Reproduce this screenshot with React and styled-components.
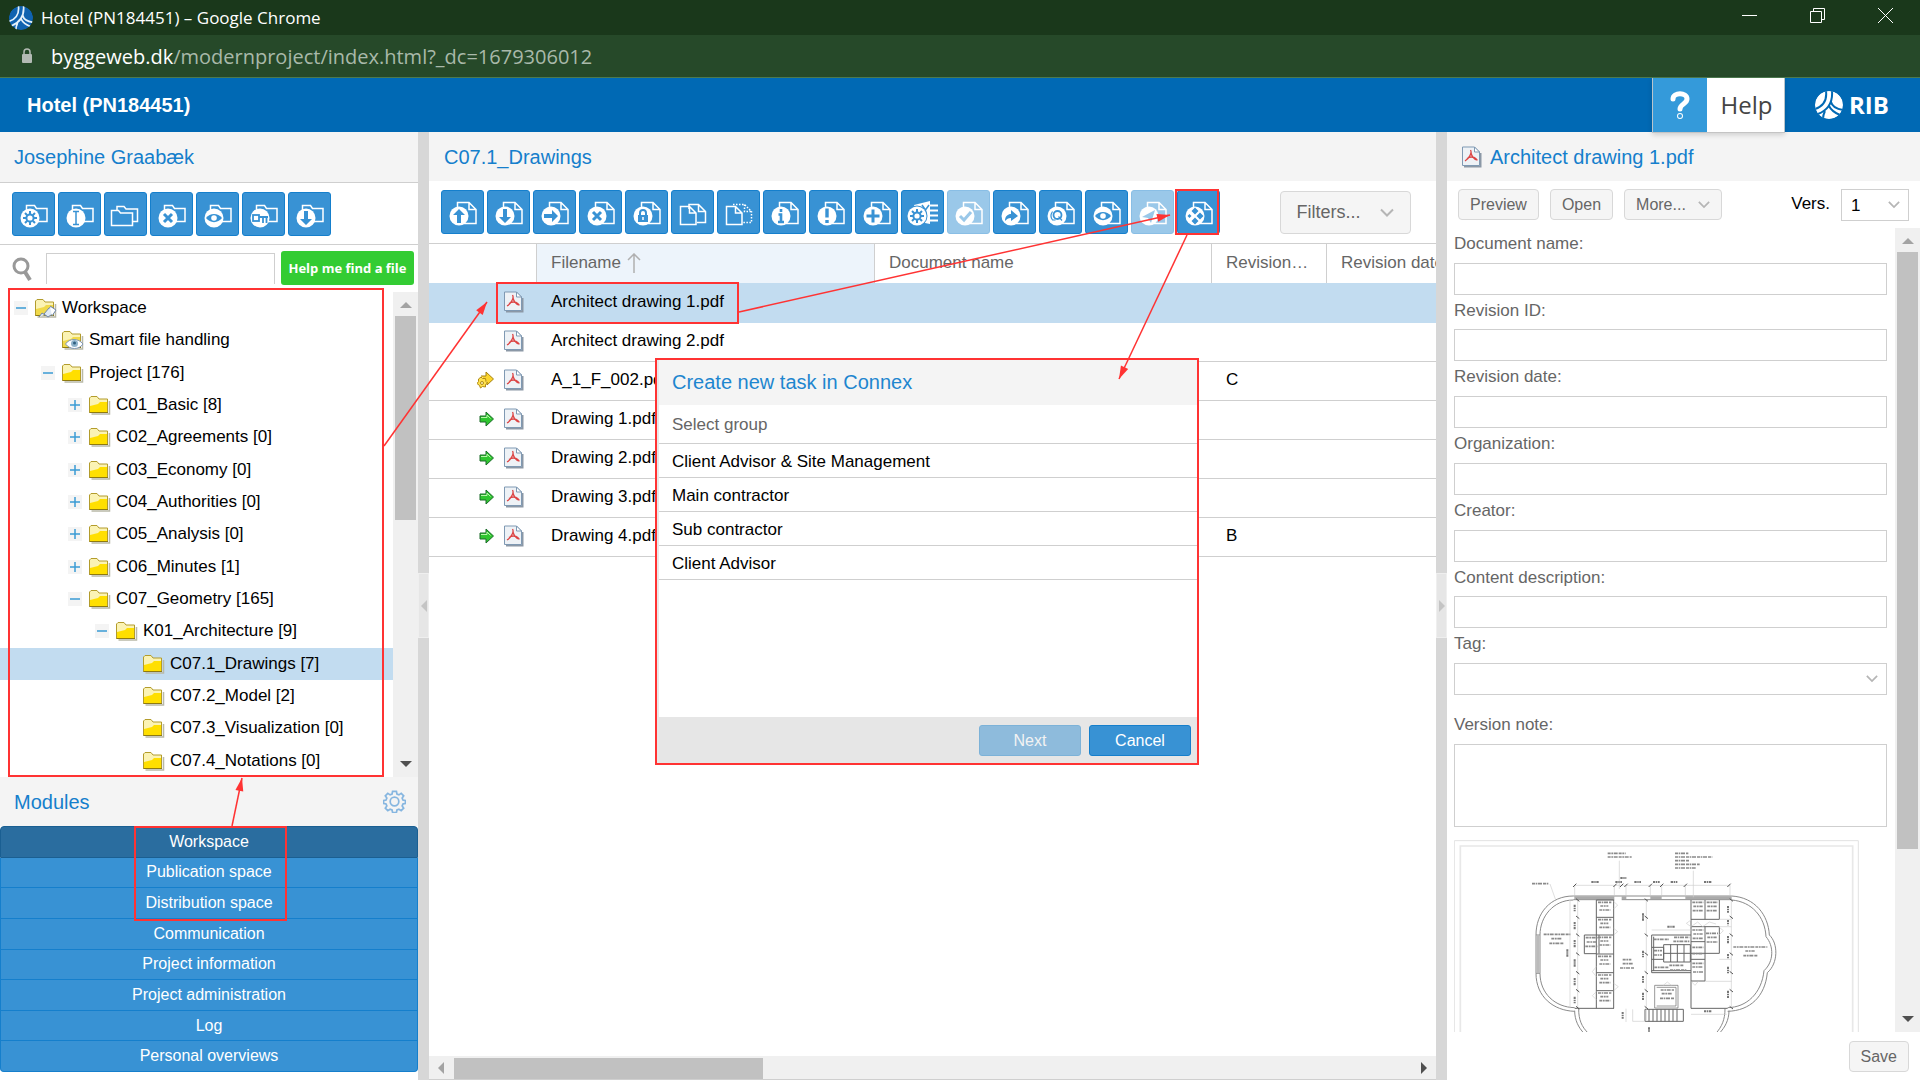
import React from "react"
import styled, { createGlobalStyle, css } from "styled-components"

const GlobalStyle = createGlobalStyle`
  * {
    box-sizing: border-box;
  }
  body {
    margin: 0;
    background: #fff;
    overflow: hidden;
  }
  body, button, input, select, textarea {
    font-family: "Liberation Sans", Arial, sans-serif;
    font-size: 17px;
  }
  svg {
    display: block;
    flex: none;
  }
`

const Page = styled.div`
  position: relative;
  display: flex;
  flex-direction: column;
  height: 100vh;
  overflow: hidden;
`

/* browser chrome */
const TitleBar = styled.div`
  display: flex;
  align-items: center;
  gap: 8px;
  height: 35px;
  padding: 0 27px 0 9px;
  background: #1a381b;
  color: #fff;
  font-family: "Open Sans", sans-serif;
  font-size: 17px;
`
const WindowTitle = styled.span`
  flex: 1;
`
const WindowControls = styled.div`
  display: flex;
  gap: 53px;
  padding-bottom: 4px;
`
const WindowButton = styled.button`
  padding: 0;
  border: 0;
  background: none;
  color: #fff;
`
const UrlBar = styled.div`
  display: flex;
  align-items: center;
  gap: 18px;
  height: 43px;
  padding-left: 21px;
  background: #264929;
  border-bottom: 1px solid #4c7a4f;
  color: #a9b9aa;
  font-family: "Open Sans", sans-serif;
  font-size: 20px;
  b {
    color: #fff;
    font-weight: 400;
  }
`

/* application header */
const AppHeader = styled.header`
  display: flex;
  align-items: center;
  height: 54px;
  padding-left: 27px;
  background: #0069b4;
  color: #fff;
`
const ProjectTitle = styled.h1`
  flex: 1;
  margin: 0;
  font-size: 20px;
`
const HelpLink = styled.a`
  display: flex;
  align-self: stretch;
  z-index: 1;
  margin-bottom: -1px;
  border-left: 1px solid #b8c4cc;
  border-right: 1px solid #b8c4cc;
  border-bottom: 1px solid #c4c4c4;
  box-shadow: 0 2px 5px rgba(0, 0, 0, 0.15);
  background: #fff;
  color: #444;
  font-family: "Open Sans", sans-serif;
  font-size: 24px;
  font-weight: 500;
  line-height: 54px;
  text-decoration: none;
`
const HelpMark = styled.span`
  width: 54px;
  background: #349ada;
  display: flex;
  align-items: center;
  justify-content: center;
`
const HelpText = styled.span`
  width: 77px;
  padding-left: 2px;
  text-align: center;
`
const Brand = styled.div`
  display: flex;
  align-items: center;
  gap: 6px;
  width: 135px;
  padding-left: 30px;
  font-family: "Open Sans", sans-serif;
  font-size: 24px;
  font-weight: 700;
  line-height: 24px;
`

/* panels */
const Main = styled.main`
  flex: 1;
  min-height: 0;
  display: grid;
  grid-template-columns: 418px 11px minmax(0, 1fr) 11px 473px;
`
const Panel = styled.section`
  display: flex;
  flex-direction: column;
  min-width: 0;
  min-height: 0;
`
const Splitter = styled.div`
  display: flex;
  flex-direction: column;
  justify-content: center;
  background: #d7d7d7;
  padding-bottom: 1px;
`
const Collapser = styled.button`
  height: 65px;
  padding: 0 0 0 2px;
  border: 1px solid #efefef;
  background: #e6e6e6;
`
const PanelHeader = styled.h2`
  display: flex;
  align-items: center;
  gap: 8px;
  flex: none;
  height: ${p => p.$height || 49}px;
  margin: 0;
  padding: 0 12px 0 ${p => p.$left || 14}px;
  background: #f4f4f4;
  border-bottom: ${p => (p.$line ? "1px solid #cfcfcf" : "0")};
  color: #157fcc;
  font-size: 20px;
  font-weight: 400;
  line-height: 22px;
  span {
    flex: 1;
  }
`
const Toolbar = styled.div`
  display: flex;
  align-items: flex-start;
  gap: 3px;
  flex: none;
  height: ${p => p.$height || 62}px;
  padding: 9px 12px 0;
  border-bottom: 1px solid #cfcfcf;
`
const blueButton = css`
  background: #3892d4;
  border: 1px solid #157fcc;
  border-radius: 3px;
  color: #fff;
`
const ToolButton = styled.button`
  ${blueButton}
  flex: none;
  width: 43px;
  height: 44px;
  padding: 0;
  opacity: ${p => (p.disabled ? 0.5 : 1)};
`
const GreyButton = styled.button`
  display: flex;
  align-items: center;
  justify-content: center;
  gap: 12px;
  height: ${p => p.$height || 31}px;
  padding: 0 11px;
  background: #f5f5f5;
  border: 1px solid #d8d8d8;
  border-radius: 4px;
  color: #666;
  font-size: ${p => p.$size || 16}px;
`
const FilterButton = styled(GreyButton)`
  width: 131px;
  gap: 18px;
  margin: 1px 0 0 57px;
`

/* search */
const SearchRow = styled.div`
  display: flex;
  align-items: flex-start;
  gap: 6px;
  height: 47px;
  padding: 6px 4px 0 11px;
`
const SearchInput = styled.input`
  flex: 1;
  min-width: 0;
  height: 31px;
  margin: 2px 0 0 7px;
  padding: 0 8px;
  border: 1px solid #cfcfcf;
  border-bottom: 0;
`
const FindButton = styled.button`
  width: 133px;
  height: 34px;
  padding: 0;
  border: 0;
  border-radius: 3px;
  background: #33cc33;
  color: #fff;
  font-family: "Open Sans", sans-serif;
  font-size: 13px;
  font-weight: 700;
`

/* scrollbars */
const ScrollArea = styled.div`
  flex: 1;
  display: flex;
  min-height: 0;
`
const Track = styled.div`
  display: flex;
  flex: none;
  align-items: center;
  background: #f0f0f0;
  ${p =>
    p.$horizontal
      ? "height: 24px; padding: 0 9px; border-bottom: 1px solid #cfcfcf;"
      : "width: 25px; flex-direction: column; padding: 10px 0;"}
`
const Thumb = styled.div`
  background: #c1c1c1;
  ${p =>
    p.$horizontal
      ? "width: 309px; height: 21px; margin: 2px auto 0 10px;"
      : "width: 21px; margin: 8px 0 auto; flex: 0 0 " + p.$size + ";"}
`

/* tree */
const Tree = styled.ul`
  flex: 1;
  display: flex;
  flex-direction: column;
  margin: 0;
  padding: 0;
  list-style: none;
`
const TreeRow = styled.li`
  flex: 1;
  display: flex;
  align-items: center;
  padding-left: ${p => 14 + 27 * p.$level}px;
  background: ${p => (p.$selected ? "#c2dcf0" : "none")};
  line-height: 20px;
  white-space: nowrap;
`
const Expander = styled.span`
  width: 14px;
  height: 14px;
  margin-right: 7px;
  background: ${p => (p.$visible ? "#f4f4f4" : "none")};
`
const TreeLabel = styled.span`
  margin-left: 5px;
`

/* modules */
const ModuleList = styled.nav`
  display: flex;
  flex-direction: column;
  flex: none;
  height: 246px;
  margin-bottom: 8px;
`
const ModuleButton = styled.button`
  flex: 1;
  padding: 0;
  background: ${p => (p.$active ? "#2a6d9f" : "#3892d4")};
  border: 1px solid ${p => (p.$active ? "#1a5f92" : "#157fcc")};
  border-top-width: ${p => (p.$active ? 1 : 0)}px;
  color: #fff;
  font-size: 16px;
  &:first-child {
    border-radius: 4px 4px 0 0;
  }
  &:last-child {
    border-radius: 0 0 4px 4px;
  }
`

/* file grid */
const GridArea = styled.div`
  flex: 1;
  min-height: 0;
  overflow: hidden;
`
const FileTable = styled.table`
  width: calc(100% + 60px);
  table-layout: fixed;
  border-collapse: separate;
  border-spacing: 0;
  th, td {
    padding: 0 14px;
    text-align: left;
    font-weight: 400;
    white-space: nowrap;
  }
  th {
    height: 39px;
    padding-bottom: 1px;
    border-left: 1px solid #cfcfcf;
    color: #666;
  }
  th:first-child {
    border-left: 0;
  }
  td {
    height: 39px;
    padding: 0 15px 2px;
    border-bottom: 1px solid #cfcfcf;
  }
  tbody tr:first-child td {
    height: 40px;
    border-bottom-color: #c2dcf0;
  }
`
const SortedHeader = styled.th`
  background: #edf4fb;
  svg {
    display: inline-block;
    margin-left: 6px;
    vertical-align: -5px;
  }
`
const FileRow = styled.tr`
  background: ${p => (p.$selected ? "#c2dcf0" : "none")};
`
const RowIcons = styled.div`
  display: flex;
  align-items: center;
  justify-content: flex-end;
  gap: 9px;
  margin-right: -3px;
`

/* detail panel */
const DetailBar = styled.div`
  display: flex;
  align-items: flex-start;
  gap: 11px;
  height: 47px;
  padding: 8px 11px 0;
`
const VersionLabel = styled.label`
  margin-left: auto;
  line-height: 30px;
`
const SelectBox = styled.span`
  display: block;
  position: relative;
  width: ${p => p.$width};
  svg {
    position: absolute;
    right: 9px;
    top: 11px;
    pointer-events: none;
  }
`
const fieldBox = css`
  display: block;
  width: 100%;
  height: 32px;
  margin: 0;
  padding: 0 9px;
  border: 1px solid #cfcfcf;
  border-radius: 0;
  background: #fff;
`
const Select = styled.select`
  ${fieldBox}
  appearance: none;
`
const TextInput = styled.input`
  ${fieldBox}
`
const NoteArea = styled.textarea`
  ${fieldBox}
  height: 83px;
  resize: none;
`
const Form = styled.form`
  flex: 1;
  min-width: 0;
  padding: 0 8px 0 7px;
  overflow: hidden;
`
const Fields = styled.div`
  display: grid;
  grid-template-rows: repeat(7, 1fr);
  height: 467px;
`
const Field = styled.div`
  display: flex;
  flex-direction: column;
  justify-content: space-between;
`
const FieldLabel = styled.label`
  color: #666;
  line-height: 32px;
`
const NoteField = styled(Field)`
  margin: 14px 0 13px;
  gap: 3px;
`
const Footer = styled.div`
  display: flex;
  justify-content: flex-end;
  height: 48px;
  padding: 9px 11px 0;
`

/* dialog */
const Dialog = styled.div`
  position: absolute;
  left: 657px;
  top: 360px;
  width: 540px;
  height: 403px;
  display: flex;
  flex-direction: column;
  background: #fff;
  border-left: 2px solid #e8e8e8;
`
const DialogTitle = styled.h2`
  height: 45px;
  margin: 0;
  padding-left: 13px;
  background: #f4f4f4;
  color: #1e86cf;
  font-size: 20px;
  font-weight: 400;
  line-height: 44px;
`
const DialogHint = styled.div`
  height: 39px;
  padding-left: 13px;
  color: #666;
  line-height: 40px;
  border-bottom: 1px solid #cfcfcf;
`
const GroupList = styled.ul`
  flex: 1;
  margin: 0;
  padding: 0;
  list-style: none;
`
const Group = styled.li`
  height: 34px;
  padding-left: 13px;
  border-bottom: 1px solid #cfcfcf;
  line-height: 36px;
`
const DialogFooter = styled.div`
  display: flex;
  justify-content: flex-end;
  gap: 8px;
  height: 46px;
  padding: 8px 6px 0;
  background: #e6e6e6;
`
const DialogButton = styled.button`
  ${blueButton}
  width: 102px;
  height: 31px;
  padding: 0;
  font-size: 16px;
  opacity: ${p => (p.disabled ? 0.5 : 1)};
`
const Overlay = styled.svg`
  position: absolute;
  left: 0;
  top: 0;
  pointer-events: none;
`

const BLUE = "#3892d4"

/* what is drawn on the white disc of a toolbar icon, disc centre is 17,25 */
const marks = {
  up: <path d="M17 18l6 6h-4v8h-4v-8h-4z" fill={BLUE} />,
  down: <path d="M17 32l6-6h-4v-8h-4v8h-4z" fill={BLUE} />,
  right: <path d="M24 25l-6-6v4h-8v4h8v4z" fill={BLUE} />,
  cross: <path d="M13 21l8 8M21 21l-8 8" stroke={BLUE} strokeWidth="3" />,
  lock: (
    <g>
      <rect x="12" y="24" width="10" height="7" fill={BLUE} />
      <path d="M14 24v-2a3 3 0 0 1 6 0v2" fill="none" stroke={BLUE} strokeWidth="2" />
      <path d="M17 26v3" stroke="#fff" />
    </g>
  ),
  info: <path d="M17 18v3M14.500 23.500H17V31M14 31h6" stroke={BLUE} strokeWidth="2.6" fill="none" />,
  warn: <path d="M17 17.5v9M17 29v3" stroke={BLUE} strokeWidth="3.4" />,
  plus: <path d="M17 18.5v13M10.500 25h13" stroke={BLUE} strokeWidth="3" />,
  check: <path d="M12 25l4 4 7-8" fill="none" stroke={BLUE} strokeWidth="3" />,
  share: <path d="M11 30c0-5 3-7 6-7v-4l7 6-7 5v-3c-3 0-4 1-6 3z" fill={BLUE} />,
  search: (
    <g fill="none" stroke={BLUE} strokeWidth="1.8">
      <circle cx="17.500" cy="24" r="4" />
      <path d="M18.500 25.500l3.500 4M12.500 20.500c-2 3-2 6 0 8.500h3" strokeWidth="1.200" />
    </g>
  ),
  eye: (
    <g>
      <path d="M9 25c4-5.500 12-5.500 16 0-4 5.500-12 5.500-16 0z" fill={BLUE} />
      <circle cx="17" cy="25" r="2.800" fill="#fff" />
    </g>
  ),
  send: <path d="M10 26l13-7-4 13-3-5z" fill={BLUE} />,
  connex: (
    <path
      d="M17 16.500l3.500 3.500-3.500 3.500-3.500-3.500zM22 21.500l3.500 3.500-3.500 3.500-3.500-3.500zM17 26.500l3.500 3.500-3.500 3.500-3.500-3.500zM11.500 23l2 2-2 2-2-2z"
      fill={BLUE}
    />
  ),
  gear: (
    <g stroke={BLUE} fill="none">
      <circle cx="17" cy="25" r="3.600" strokeWidth="2" />
      <path
        d="M17 18v3M17 29v3M10 25h3M21 25h3M12 20l2.200 2.200M20 28l2 2M22 20l-2.200 2.200M12 30l2.200-2.200"
        strokeWidth="2"
      />
    </g>
  ),
  text: <path d="M14 18.500h6M14 31.500h6M17 18.500v13" stroke={BLUE} strokeWidth="1.500" />,
  key: (
    <g fill="none" stroke={BLUE} strokeWidth="1.800">
      <rect x="10" y="22" width="6" height="6" />
      <path d="M16 24h9M20 24v6M23.500 24v6" />
    </g>
  )
}

const ToolIcon = ({ base, mark }) => (
  <svg width="41" height="42" viewBox="0 0 41 42" fill="none" stroke="#fff" strokeWidth="1.500">
    {base === "doc" && <path d="M15.500 20V11.500H27l7 7V32.500H16M27 11.500v7h7" />}
    {base === "folder" && <path d="M13.500 26V12.500h8l2 3h10.500v13H16" />}
    {base === "folders" && (
      <g>
        <path d="M6.500 32.500V17.500h7l2 2.500h12v12.500z" />
        <path d="M12 17V13.500h7l2 2.500h11.500v12.500h-5" />
      </g>
    )}
    {base === "docs" && (
      <g>
        <path d="M17 18v-4.500h9.500l7 7v11H25M26.500 13.500v7h7" />
        <path d="M8.500 15.500h9l6.500 6.500v11.500H8.500zM17.500 15.500V22H24" />
      </g>
    )}
    {base === "dotted" && (
      <g>
        <path d="M15 13.500h11.500l7 7v11H25M26.500 13.500v7h7" strokeDasharray="1.500 1.500" />
        <path d="M8.500 15.500h9l6.500 6.500v11.500H8.500zM17.500 15.500V22H24" />
      </g>
    )}
    {base === "list" && (
      <g>
        <path d="M12 14l16-4v23l-10-2z" fill="#fff" stroke="none" />
        <path d="M28 14.500h8M28 19.500h8M28 24.500h8M28 29.500h8" strokeWidth="2" />
        <path d="M20 14l3.500 5 3.500-5M23.500 19v5" stroke={BLUE} />
      </g>
    )}
    {mark && (
      <g stroke="none" transform={base === "list" ? "translate(-2 0)" : undefined}>
        {base === "list" && <circle cx="17" cy="25" r="10.500" fill={BLUE} />}
        <circle cx="17" cy="25" r="9.500" fill="#fff" />
        {marks[mark]}
      </g>
    )}
  </svg>
)

const FolderIcon = ({ variant }) => (
  <svg width="22" height="20" viewBox="0 0 22 20">
    <path d="M2.500 19h18V6" fill="none" stroke="#b9b9a8" strokeWidth="1.500" />
    <path d="M.500 17.500V3L2 1.500h6L10 4h8.500v13.500z" fill="#fbf3b4" stroke="#b39c2c" />
    <path d="M1 17V11l8-2 2-2h7v10z" fill={variant ? "#f0d94a" : "#ffdf00"} />
    <path d="M.500 17.500h18.500" stroke="#8f7a10" />
    {variant === "tag" && (
      <g stroke="#6f86a8" fill="#dfe9f5">
        <path d="M4 19l3-4 3 2M9 16l5-6 3-1 3 3-1 3-6 4z" />
        <path d="M15 8l6 4-4 6" fill="#fff" />
      </g>
    )}
    {variant === "eye" && (
      <g>
        <path d="M3.500 14c4-6 13-6 17.500 0-4 6-13 6-17.500 0z" fill="#fff" stroke="#8097b5" />
        <circle cx="12.500" cy="13.500" r="3.500" fill="#8fb4cc" />
        <circle cx="12.500" cy="13" r="1.500" fill="#2f5f80" />
      </g>
    )}
  </svg>
)

const PdfIcon = () => (
  <svg width="20" height="22" viewBox="0 0 20 22">
    <path d="M2 20.500h16.500V7" fill="none" stroke="#8b98a6" strokeWidth="2" />
    <path d="M.500 1h12l5 5v13.500H.500z" fill="#eef2f6" stroke="#7f99b3" />
    <path d="M12.500 1v5h5z" fill="#fff" stroke="#7f99b3" />
    <path d="M8.500 4c2 3-2 9-5.500 11M9 7c1 4 3.500 6.500 6.500 7M5 12.500c3-2 6.500-2 9.500.500" fill="none" stroke="#dc4444" strokeWidth="1.300" />
  </svg>
)

const GreenArrow = () => (
  <svg width="16" height="16" viewBox="0 0 16 16">
    <path d="M1 5h6V1l7.500 7L7 15v-4H1z" fill="#2fc62f" stroke="#1c6b2a" />
    <path d="M2 6.500h6V4l3.500 3.500" fill="none" stroke="#b8f5a8" />
  </svg>
)

const YellowArrow = () => (
  <svg width="18" height="18" viewBox="0 0 18 18">
    <path d="M4 5h5V1l7.500 7L10 14v-3" fill="#fbd52d" stroke="#a5810f" />
    <path d="M4 6l1.500 1.500h3l.500 3 1.500 1.500-2 1.500v2.500l-3-.500-2 1.500-1-2.500L0 12.500l1.500-2V8z" fill="#ffe14c" stroke="#b08a14" />
    <circle cx="5" cy="12" r="1.500" fill="#fff6c0" stroke="#b08a14" />
  </svg>
)

const Chevron = ({ size = 14 }) => (
  <svg width={size} height="9" viewBox="0 0 14 9" fill="none" stroke="#b5b5b5" strokeWidth="2">
    <path d="M1 1.500l6 6 6-6" />
  </svg>
)

const shapes = {
  up: ["0 0 12 6", "M0 6h12L6 0z"],
  down: ["0 0 12 6", "M0 0h12L6 6z"],
  left: ["0 0 6 12", "M6 0v12L0 6z"],
  right: ["0 0 6 12", "M0 0v12l6-6z"]
}
const Triangle = ({ dir, color = "#a3a3a3" }) => {
  const [box, d] = shapes[dir]
  const tall = dir === "left" || dir === "right"
  return (
    <svg width={tall ? 6 : 12} height={tall ? 12 : 6} viewBox={box}>
      <path d={d} fill={color} />
    </svg>
  )
}

const GearIcon = () => (
  <svg width="23" height="23" viewBox="0 0 24 24" fill="none" stroke="#86b6e0" strokeWidth="1.800">
    <circle cx="12" cy="12" r="4.500" />
    <path d="M10 1.500h4l.600 2.800 2 .800 2.400-1.600 2.600 2.600-1.600 2.400.800 2 2.700.500v3l-2.700.600-.800 2 1.600 2.400-2.600 2.600-2.400-1.600-2 .800-.600 2.700h-4l-.600-2.700-2-.800L5 21.600 2.400 19 4 16.600l-.800-2-2.700-.600v-3l2.700-.500.800-2L2.400 6.100 5 3.500l2.400 1.600 2-.800z" />
  </svg>
)

const RibMark = ({ size, disc, line }) => (
  <svg width={size} height={size} viewBox="0 0 28 28">
    <clipPath id={"disc" + size}>
      <circle cx="14" cy="14" r="14" />
    </clipPath>
    <g clipPath={"url(#disc" + size + ")"} fill="none" stroke={line} strokeWidth="2">
      <circle cx="14" cy="14" r="14" fill={disc} stroke="none" />
      <path d="M11 0c1 8-2 15-11 18M17 0c1 12-4 19-14 23M16 11c1 4 5 7 12 8M14 15c2 4 6 7 11 9M10 20c-1 2-2 5-2 8" />
    </g>
  </svg>
)

/* first floor plan thumbnail */
const stack = [240, 292, 345, 402, 458, 512]
const FloorPlan = () => (
  <svg width="405" height="192" viewBox="72 60 1215 576" fill="none" stroke="#666" strokeWidth="3">
    <path d="M73 640V62H1285V640" stroke="#e2e2e2" />
    <path d="M91 640V78H1268V640" stroke="#e8e8e8" strokeWidth="5" />
    <g stroke="#8a8a8a">
      <path d="M430 228C360 228 318 280 318 345V460C318 530 370 572 434 574M430 240C370 240 330 290 330 345V460C330 520 375 562 434 563" />
      <path d="M318 345h12M318 460h12" />
      <path d="M324 345v115" strokeWidth="9" stroke="#bbb" />
      <path d="M905 228C975 232 1015 285 1018 345C1045 370 1045 430 1012 458C1005 530 960 572 893 574M905 240C965 245 1005 290 1008 350C1032 378 1032 425 1002 452C995 520 950 562 893 563" />
      <path d="M430 228H905M430 239H553M575 239H905" />
      <path d="M433 233H553M575 233h14M661 233h34M766 233H905" strokeWidth="8" stroke="#aaa" />
      <path d="M434 572C434 600 445 622 462 640M446 566C446 600 455 620 475 640M897 572C897 600 885 622 868 640M885 566C885 600 875 620 858 640" />
    </g>
    <g>
      <path d="M499 240V565M551 240V565M463 345h36M463 345v56h36M507 345v56M434 565h118" />
      {stack.map(y => (
        <path key={y} d={`M499 ${y}h52`} />
      ))}
      <path d="M783 240V565H893M783 298h85V240M825 240v58M783 320h85v80h-85M825 320v163h-42M783 365h42M783 418h42" />
      <path d="M665 345H783M665 345V458H783M671 350V453M665 452H783M665 382h36v36h-36" />
      <path d="M701 374h80v52h-80zM701 400h80M722 374v52M742 374v52M762 374v52" />
      <path d="M674 496h70v68h-70zM680 502h58v56h-58" strokeWidth="2" />
      <path d="M645 568h115v36h-115zM657 568v36M669 568v36M681 568v36M693 568v36M705 568v36M717 568v36M729 568v36M741 568v36" />
    </g>
    <g stroke="#cfcfcf" strokeWidth="2">
      <path d="M434 196H553M553 196H900M420 240V565M443 240V565M649 240V600M904 240V565M588 566v40M608 568v36h38M825 484h80M868 298h36M868 320h36M868 418h36M665 330H783M783 583H890" />
      <path d="M434 196v30M553 196v30M588 196v30M661 196v30M695 196v30M766 196v30M900 196v30M568 122v85M790 152v80M360 192l16 45" />
      <path d="M551 245l12 10-12 12M551 325l12 10-12 10M499 440l-12 15 12 15M551 490l14 10-14 12M499 515l-12 12 12 12M783 300l-14 10 14 10 20-14 15 14 20-14 20 6M868 322l12 10-12 12M700 496l12-10 12 10M783 484l12 12 10-12" />
    </g>
    <g stroke="#555" strokeWidth="3">
      {[434, 555, 575, 588, 661, 695, 766, 897].map(x => (
        <path key={x} d={`M${x - 5} 201l10-10`} />
      ))}
      {[240, 292, 345, 402, 458, 512, 563].map(y => (
        <path key={y} d={`M438 ${y - 4}l10 8M644 ${y - 4}l10 8M899 ${y - 4}l10 8`} />
      ))}
    </g>
    <g stroke="#777" strokeWidth="6" strokeDasharray="7 2 4 2">
      <path d="M484 186h22M556 186h20M613 186h20M669 186h20M722 186h20M822 186h22M571 174h18M712 320h22M822 574h24" />
      <path d="M434 254v20M434 306v22M434 360v22M434 418v22M434 474v22M434 530v20M412 388v22M639 280v24M639 392v20M639 468v20M639 518v22M894 258v20M894 300v16M894 348v22M894 402v14M894 440v20M894 512v22M578 576v20M657 622v14" />
    </g>
    <g stroke="#8a8a8a" strokeWidth="5" strokeDasharray="9 2 5 2 12 3">
      <path d="M533 100h54M533 111h72M735 100h40M735 111h112M735 122h42M735 133h74M735 144h62M306 191h50" />
      <path d="M341 343h80M364 356h30M358 370h44M910 381h102M946 393h28M940 407h44M578 419h26M578 431h30M570 444h42" />
      {stack.map(y => (
        <path key={y} d={`M504 ${y + 7}h40M511 ${y + 18}h24M508 ${y + 30}h34`} />
      ))}
      <path d="M467 353h36M470 366h28M466 379h36M787 247h34M790 259h28M788 272h32M830 247h34M832 259h28M830 272h32M787 330h34M790 342h28M788 355h32M828 340h36M832 352h28M830 366h34M787 382h34M787 401h34M787 430h34M787 441h30M789 456h32" />
      <path d="M732 352h46M730 364h48M718 436h44M720 450h50M671 358h46M673 442h42M692 510h40M695 521h30M690 535h42M672 392h24M672 405h24" />
    </g>
  </svg>
)

const leftTools = [
  ["folder", "gear"], ["folder", "text"], ["folders"], ["folder", "cross"],
  ["folder", "eye"], ["folder", "key"], ["folder", "down"]
]

const fileTools = [
  ["doc", "up"], ["doc", "down"], ["doc", "right"], ["doc", "cross"], ["doc", "lock"],
  ["docs"], ["dotted"], ["doc", "info"], ["doc", "warn"], ["doc", "plus"], ["list", "gear"],
  ["doc", "check", true], ["doc", "share"], ["doc", "search"], ["doc", "eye"],
  ["doc", "send", true], ["doc", "connex"]
]

const tree = [
  [0, "-", "Workspace", "tag"],
  [1, "", "Smart file handling", "eye"],
  [1, "-", "Project [176]"],
  [2, "+", "C01_Basic [8]"],
  [2, "+", "C02_Agreements [0]"],
  [2, "+", "C03_Economy [0]"],
  [2, "+", "C04_Authorities [0]"],
  [2, "+", "C05_Analysis [0]"],
  [2, "+", "C06_Minutes [1]"],
  [2, "-", "C07_Geometry [165]"],
  [3, "-", "K01_Architecture [9]"],
  [4, "", "C07.1_Drawings [7]"],
  [4, "", "C07.2_Model [2]"],
  [4, "", "C07.3_Visualization [0]"],
  [4, "", "C07.4_Notations [0]"]
]

const modules = [
  "Workspace", "Publication space", "Distribution space", "Communication",
  "Project information", "Project administration", "Log", "Personal overviews"
]

const files = [
  { name: "Architect drawing 1.pdf" },
  { name: "Architect drawing 2.pdf" },
  { name: "A_1_F_002.pdf", status: "yellow", revision: "C" },
  { name: "Drawing 1.pdf", status: "green" },
  { name: "Drawing 2.pdf", status: "green" },
  { name: "Drawing 3.pdf", status: "green" },
  { name: "Drawing 4.pdf", status: "green", revision: "B" }
]

const fields = [
  "Document name:", "Revision ID:", "Revision date:", "Organization:",
  "Creator:", "Content description:"
]

const groups = ["Client Advisor & Site Management", "Main contractor", "Sub contractor", "Client Advisor"]

const BrowserBars = () => (
  <>
    <TitleBar>
      <RibMark size={24} disc="#0f62b0" line="#e4f1fb" />
      <WindowTitle>Hotel (PN184451) – Google Chrome</WindowTitle>
      <WindowControls>
        <WindowButton aria-label="Minimize">
          <svg width="15" height="15" stroke="#fff"><path d="M0 7.500h15" /></svg>
        </WindowButton>
        <WindowButton aria-label="Restore">
          <svg width="15" height="15" stroke="#fff" fill="none">
            <path d="M.500 3.500h11v11H.500zM3.500 3.500v-3h11v11h-3" />
          </svg>
        </WindowButton>
        <WindowButton aria-label="Close">
          <svg width="15" height="15" stroke="#fff"><path d="M0 0l15 15M15 0L0 15" /></svg>
        </WindowButton>
      </WindowControls>
    </TitleBar>
    <UrlBar>
      <svg width="12" height="16" viewBox="0 0 12 16">
        <rect x="1" y="6" width="10" height="9" rx="1" fill="#b3bab4" />
        <path d="M3 6V4a3 3 0 0 1 6 0v2" fill="none" stroke="#b3bab4" strokeWidth="1.500" />
      </svg>
      <span>
        <b>byggeweb.dk</b>/modernproject/index.html?_dc=1679306012
      </span>
    </UrlBar>
  </>
)

const FolderPanel = () => (
  <Panel>
    <PanelHeader $height={51} $line>Josephine Graabæk</PanelHeader>
    <Toolbar>
      {leftTools.map(([base, mark], i) => (
        <ToolButton key={i} aria-label={mark || base}>
          <ToolIcon base={base} mark={mark} />
        </ToolButton>
      ))}
    </Toolbar>
    <SearchRow>
      <svg width="22" height="32" viewBox="0 0 22 32" fill="none" stroke="#999">
        <circle cx="10" cy="15" r="7" strokeWidth="3" />
        <path d="M14 21l5 8" strokeWidth="4" />
      </svg>
      <SearchInput aria-label="Search" />
      <FindButton>Help me find a file</FindButton>
    </SearchRow>
    <ScrollArea>
      <Tree>
        {tree.map(([level, sign, label, variant]) => (
          <TreeRow key={label} $level={level} $selected={label.startsWith("C07.1")}>
            <Expander $visible={sign}>
              {sign && (
                <svg width="14" height="14" stroke="#3a9bd4" strokeWidth="1.500">
                  <path d={sign === "+" ? "M2 7h10M7 2v10" : "M2 7h10"} />
                </svg>
              )}
            </Expander>
            <FolderIcon variant={variant} />
            <TreeLabel>{label}</TreeLabel>
          </TreeRow>
        ))}
      </Tree>
      <Track>
        <Triangle dir="up" />
        <Thumb $size="204px" />
        <Triangle dir="down" color="#505050" />
      </Track>
    </ScrollArea>
    <PanelHeader>
      <span>Modules</span>
      <GearIcon />
    </PanelHeader>
    <ModuleList>
      {modules.map((name, i) => (
        <ModuleButton key={name} $active={i === 0}>{name}</ModuleButton>
      ))}
    </ModuleList>
  </Panel>
)

const FilePanel = () => (
  <Panel>
    <PanelHeader $left={15}>C07.1_Drawings</PanelHeader>
    <Toolbar $height={63}>
      {fileTools.map(([base, mark, disabled], i) => (
        <ToolButton key={i} aria-label={mark || base} disabled={disabled}>
          <ToolIcon base={base} mark={mark} />
        </ToolButton>
      ))}
      <FilterButton $height={43} $size={18}>
        Filters... <Chevron size={16} />
      </FilterButton>
    </Toolbar>
    <GridArea>
      <FileTable>
        <colgroup>
          <col style={{ width: 107 }} />
          <col style={{ width: 338 }} />
          <col style={{ width: 337 }} />
          <col style={{ width: 115 }} />
          <col />
        </colgroup>
        <thead>
          <tr>
            <th aria-label="Status" />
            <SortedHeader>
              Filename
              <svg width="14" height="20" viewBox="0 0 14 20" fill="none" stroke="#b0b0b0" strokeWidth="1.500">
                <path d="M7 20V1M1 7l6-6 6 6" />
              </svg>
            </SortedHeader>
            <th>Document name</th>
            <th>Revision…</th>
            <th>Revision date</th>
          </tr>
        </thead>
        <tbody>
          {files.map((file, i) => (
            <FileRow key={file.name} $selected={i === 0}>
              <td>
                <RowIcons>
                  {file.status === "yellow" && <YellowArrow />}
                  {file.status === "green" && <GreenArrow />}
                  <PdfIcon />
                </RowIcons>
              </td>
              <td>{file.name}</td>
              <td />
              <td>{file.revision}</td>
              <td />
            </FileRow>
          ))}
        </tbody>
      </FileTable>
    </GridArea>
    <Track $horizontal>
      <Triangle dir="left" />
      <Thumb $horizontal />
      <Triangle dir="right" color="#505050" />
    </Track>
  </Panel>
)

const DetailPanel = () => (
  <Panel>
    <PanelHeader $left={15}>
      <PdfIcon />
      Architect drawing 1.pdf
    </PanelHeader>
    <DetailBar>
      <GreyButton>Preview</GreyButton>
      <GreyButton>Open</GreyButton>
      <GreyButton>
        More... <Chevron size={12} />
      </GreyButton>
      <VersionLabel htmlFor="version">Vers.</VersionLabel>
      <SelectBox $width="68px">
        <Select id="version">
          <option>1</option>
        </Select>
        <Chevron size={12} />
      </SelectBox>
    </DetailBar>
    <ScrollArea>
      <Form>
        <Fields>
          {fields.map(label => (
            <Field key={label}>
              <FieldLabel htmlFor={label}>{label}</FieldLabel>
              <TextInput id={label} />
            </Field>
          ))}
          <Field>
            <FieldLabel htmlFor="tag">Tag:</FieldLabel>
            <SelectBox $width="100%">
              <Select id="tag" />
              <Chevron size={12} />
            </SelectBox>
          </Field>
        </Fields>
        <NoteField>
          <FieldLabel htmlFor="note">Version note:</FieldLabel>
          <NoteArea id="note" />
        </NoteField>
        <FloorPlan />
      </Form>
      <Track>
        <Triangle dir="up" />
        <Thumb $size="597px" />
        <Triangle dir="down" color="#505050" />
      </Track>
    </ScrollArea>
    <Footer>
      <GreyButton>Save</GreyButton>
    </Footer>
  </Panel>
)

const arrows = [
  [384, 446, 487, 302],
  [232, 826, 242, 778],
  [739, 312, 1170, 215],
  [1187, 235, 1119, 379]
]

const Annotations = () => (
  <Overlay width="100%" height="100%" fill="none" stroke="#ff3333" strokeWidth="2">
    <rect x="9" y="289" width="374" height="487" />
    <rect x="135" y="827" width="151" height="93" />
    <rect x="497" y="283" width="241" height="40" />
    <rect x="1176" y="190" width="42" height="44" />
    <rect x="656" y="359" width="542" height="405" />
    {arrows.map(([x1, y1, x2, y2]) => (
      <g key={x1}>
        <path d={`M${x1} ${y1}L${x2} ${y2}`} strokeWidth="1.500" />
        <path
          d="M0 0l-13-4v8z"
          fill="#ff3333"
          stroke="none"
          transform={`translate(${x2} ${y2}) rotate(${(Math.atan2(y2 - y1, x2 - x1) * 180) / Math.PI})`}
        />
      </g>
    ))}
  </Overlay>
)

const App = () => (
  <Page>
    <GlobalStyle />
    <BrowserBars />
    <AppHeader>
      <ProjectTitle>Hotel (PN184451)</ProjectTitle>
      <HelpLink href="#help">
        <HelpMark>
          <svg width="20" height="28" viewBox="0 0 20 28" fill="none" stroke="#fff" strokeWidth="5" strokeLinecap="round">
            <path d="M3 8c0-7 14-7 14 0 0 5-7 5-7 10" />
            <circle cx="10" cy="25" r=".500" />
          </svg>
        </HelpMark>
        <HelpText>Help</HelpText>
      </HelpLink>
      <Brand>
        <RibMark size={28} disc="#fff" line="#0069b4" />
        RIB
      </Brand>
    </AppHeader>
    <Main>
      <FolderPanel />
      <Splitter>
        <Collapser aria-label="Collapse left"><Triangle dir="left" color="#c4c4c4" /></Collapser>
      </Splitter>
      <FilePanel />
      <Splitter>
        <Collapser aria-label="Collapse right"><Triangle dir="right" color="#c4c4c4" /></Collapser>
      </Splitter>
      <DetailPanel />
    </Main>
    <Dialog role="dialog">
      <DialogTitle>Create new task in Connex</DialogTitle>
      <DialogHint>Select group</DialogHint>
      <GroupList>
        {groups.map(name => (
          <Group key={name}>{name}</Group>
        ))}
      </GroupList>
      <DialogFooter>
        <DialogButton disabled>Next</DialogButton>
        <DialogButton>Cancel</DialogButton>
      </DialogFooter>
    </Dialog>
    <Annotations />
  </Page>
)

export default App
